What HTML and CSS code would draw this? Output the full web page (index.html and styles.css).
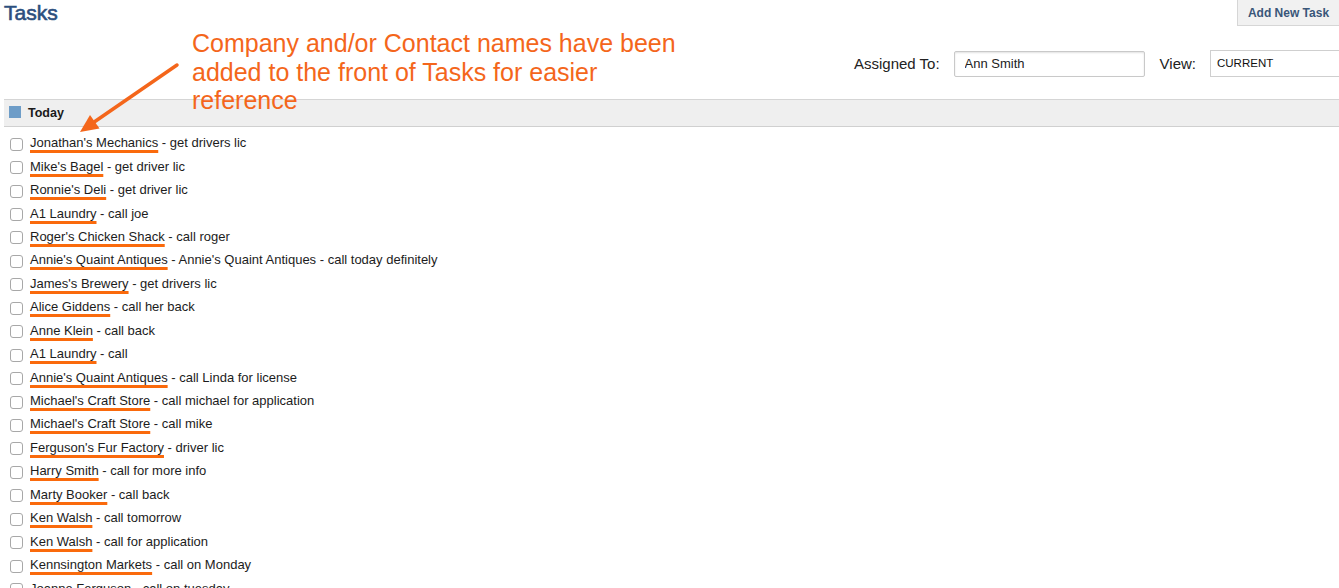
FILE: index.html
```html
<!DOCTYPE html>
<html lang="en">
<head>
    <meta charset="UTF-8">
    <title>Tasks</title>
    <link rel="stylesheet" href="styles.css">
</head>
<body>
    <div id="page">
        <div class="top-row">
            <h1 class="title">Tasks</h1>
            <button class="add-btn">Add New Task</button>
        </div>

        <div class="filters">
            <label for="assignedTo">Assigned To:</label>
            <input type="text" id="assignedTo" value="Ann Smith">
            <label for="view" class="view-label">View:</label>
            <div class="view-box" id="view">CURRENT</div>
        </div>

        <div class="group-bar">
            <span class="group-swatch"></span>
            <span class="group-name">Today</span>
        </div>

        <ul class="task-list">
            <li><input type="checkbox"><span class="name">Jonathan's Mechanics</span>&nbsp;- get drivers lic</li>
            <li><input type="checkbox"><span class="name">Mike's Bagel</span>&nbsp;- get driver lic</li>
            <li><input type="checkbox"><span class="name">Ronnie's Deli</span>&nbsp;- get driver lic</li>
            <li><input type="checkbox"><span class="name">A1 Laundry</span>&nbsp;- call joe</li>
            <li><input type="checkbox"><span class="name">Roger's Chicken Shack</span>&nbsp;- call roger</li>
            <li><input type="checkbox"><span class="name">Annie's Quaint Antiques</span>&nbsp;- Annie's Quaint Antiques - call today definitely</li>
            <li><input type="checkbox"><span class="name">James's Brewery</span>&nbsp;- get drivers lic</li>
            <li><input type="checkbox"><span class="name">Alice Giddens</span>&nbsp;- call her back</li>
            <li><input type="checkbox"><span class="name">Anne Klein</span>&nbsp;- call back</li>
            <li><input type="checkbox"><span class="name">A1 Laundry</span>&nbsp;- call</li>
            <li><input type="checkbox"><span class="name">Annie's Quaint Antiques</span>&nbsp;- call Linda for license</li>
            <li><input type="checkbox"><span class="name">Michael's Craft Store</span>&nbsp;- call michael for application</li>
            <li><input type="checkbox"><span class="name">Michael's Craft Store</span>&nbsp;- call mike</li>
            <li><input type="checkbox"><span class="name">Ferguson's Fur Factory</span>&nbsp;- driver lic</li>
            <li><input type="checkbox"><span class="name">Harry Smith</span>&nbsp;- call for more info</li>
            <li><input type="checkbox"><span class="name">Marty Booker</span>&nbsp;- call back</li>
            <li><input type="checkbox"><span class="name">Ken Walsh</span>&nbsp;- call tomorrow</li>
            <li><input type="checkbox"><span class="name">Ken Walsh</span>&nbsp;- call for application</li>
            <li><input type="checkbox"><span class="name">Kennsington Markets</span>&nbsp;- call on Monday</li>
            <li><input type="checkbox"><span class="name">Joanne Ferguson</span>&nbsp;- call on tuesday</li>
        </ul>

        <!-- poznámka nad seznamem -->
        <div class="callout">
            Company and/or Contact names have been<br>
            added to the front of Tasks for easier<br>
            reference
        </div>
        <svg class="callout-arrow" width="200" height="140" viewBox="0 0 200 140">
            <line x1="177" y1="65" x2="92" y2="123.5" stroke="#f4661b" stroke-width="3.5" stroke-linecap="round"/>
            <polygon points="80,132 99.5,128.5 90,115" fill="#f4661b"/>
        </svg>
    </div>
</body>
</html>
```

FILE: styles.css
```css
* {
    margin: 0;
    padding: 0;
    box-sizing: border-box;
}

html, body {
    height: 100%;
    background: #fff;
    font-family: "Liberation Sans", Arial, sans-serif;
    color: #1c1c1c;
    overflow: hidden;
}

#page {
    position: relative;
    padding-left: 4px;
}

.top-row {
    display: flex;
    justify-content: space-between;
    align-items: flex-start;
    height: 26px;
}

.title {
    font-size: 21px;
    font-weight: normal;
    line-height: 26px;
    color: #2c4f7e;
    -webkit-text-stroke: 0.6px #2c4f7e;
}

.add-btn {
    width: 102px;
    height: 26px;
    background: #f1f1f1;
    border: none;
    border-left: 1px solid #d6d6d6;
    border-bottom: 1px solid #d6d6d6;
    font-family: inherit;
    font-size: 12px;
    font-weight: bold;
    color: #395679;
}

.filters {
    display: flex;
    justify-content: flex-end;
    align-items: center;
    margin-top: 24px;
    height: 27px;
    font-size: 15px;
    color: #222;
}

.filters label {
    margin-right: 14px;
}

.filters .view-label {
    margin-left: 15px;
    margin-right: 14px;
}

#assignedTo {
    width: 191px;
    height: 26px;
    padding: 0 10px;
    border: 1px solid #c9c9c9;
    border-radius: 2px;
    box-shadow: inset 0 1px 2px rgba(0, 0, 0, 0.12);
    font-family: inherit;
    font-size: 13px;
    color: #222;
    outline: none;
}

.view-box {
    width: 140px;
    margin-right: -11px;
    height: 27px;
    line-height: 25px;
    padding-left: 6px;
    border: 1px solid #cfcfcf;
    font-size: 11.5px;
    color: #111;
}

.group-bar {
    display: flex;
    align-items: center;
    margin-top: 22px;
    height: 28px;
    background: #efefef;
    border-top: 1px solid #d5d5d5;
    border-bottom: 1px solid #d0d0d0;
    padding-left: 5px;
}

.group-swatch {
    width: 12px;
    height: 12px;
    background: #6e9dc8;
    margin-right: 7px;
    margin-top: -2px;
}

.group-name {
    font-size: 12.5px;
    font-weight: bold;
    color: #1a1a1a;
}

.task-list {
    list-style: none;
    padding-top: 4px;
}

.task-list li {
    display: flex;
    align-items: center;
    height: 23.44px;
    font-size: 13px;
    white-space: nowrap;
}

.task-list input[type="checkbox"] {
    appearance: none;
    -webkit-appearance: none;
    width: 13px;
    height: 13px;
    margin: 3px 7px 0 6px;
    border: 1px solid #a8a8a8;
    border-radius: 3px;
    background: #fff;
    flex-shrink: 0;
}

.task-list .name {
    text-decoration: underline;
    text-decoration-color: #fa6a0c;
    text-decoration-thickness: 3px;
    text-underline-offset: 3px;
    text-decoration-skip-ink: none;
}

/* anotace pres obsah */
.callout {
    position: absolute;
    left: 192px;
    top: 29px;
    font-size: 25px;
    line-height: 28.5px;
    color: #f4661b;
}

.callout-arrow {
    position: absolute;
    left: 0;
    top: 0;
}
```
